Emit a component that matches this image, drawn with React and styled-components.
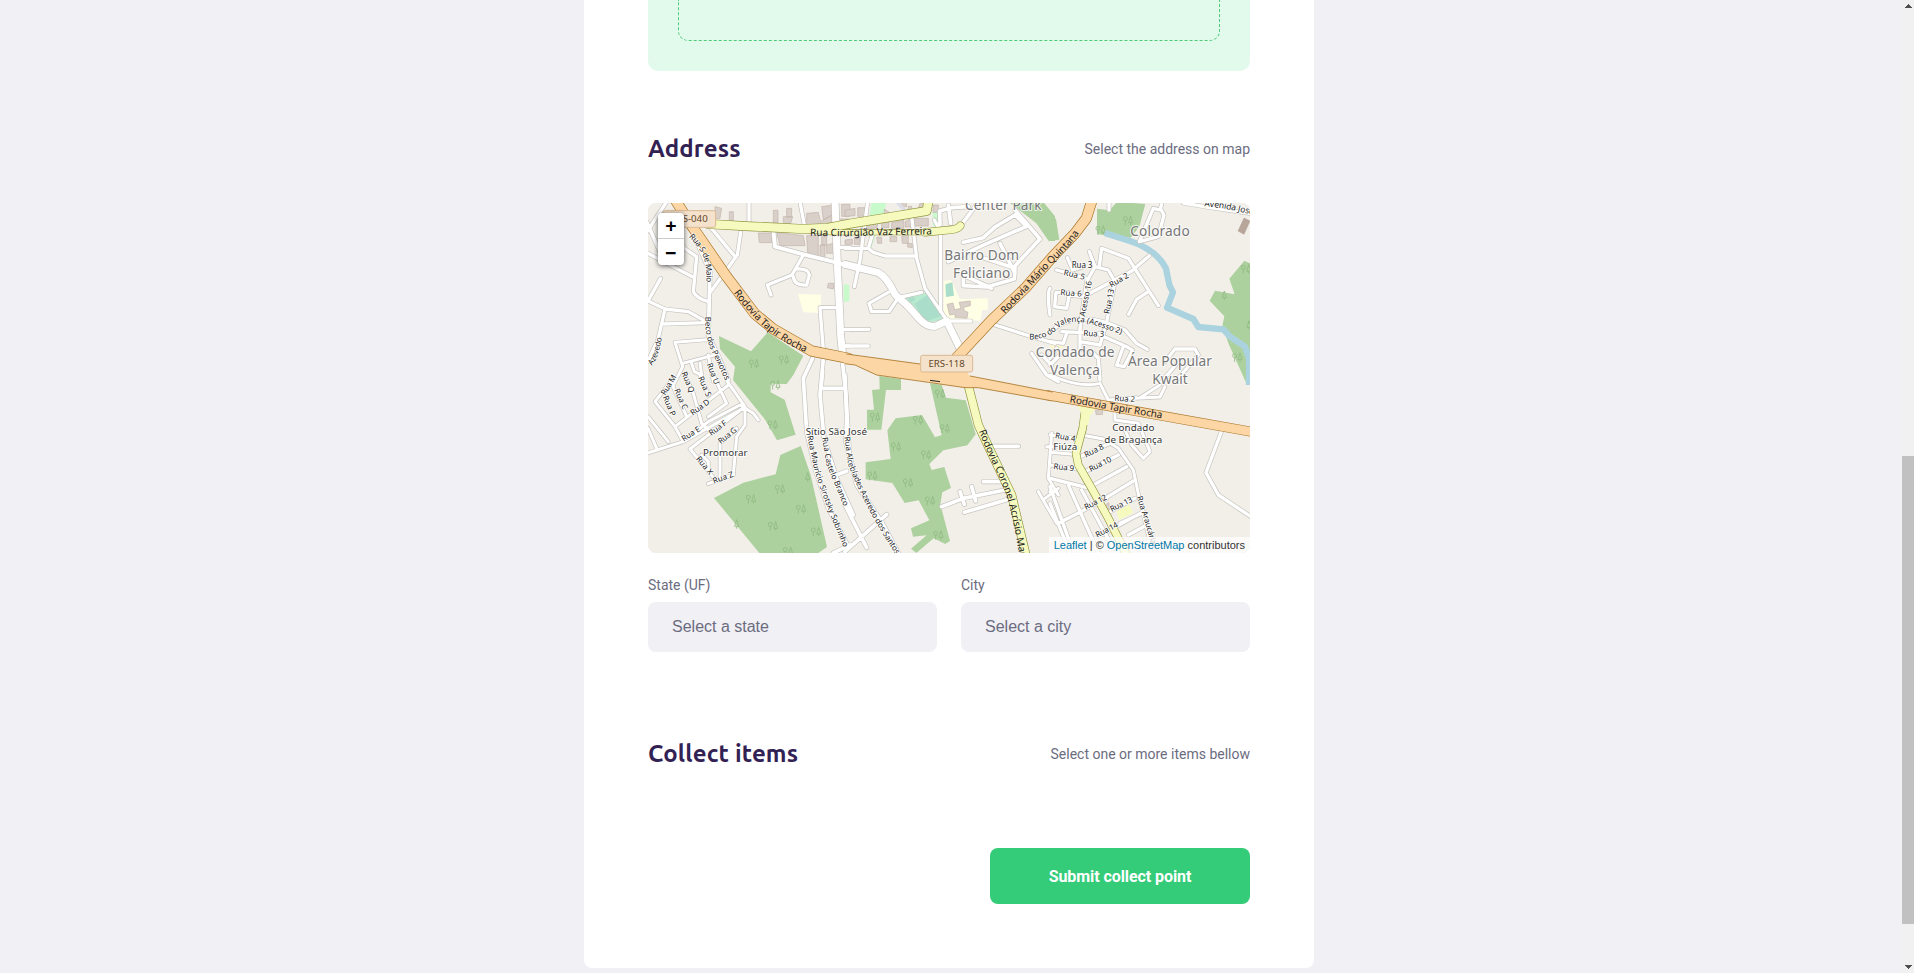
import React from 'react';
import styled, { createGlobalStyle } from 'styled-components';

const Global = createGlobalStyle`
  * { box-sizing: border-box; margin: 0; padding: 0; }
  body { background: #f0f0f5; font-family: Roboto, "Liberation Sans", sans-serif; overflow: hidden; }
`;

const Page = styled.div`
  display: flex;
  height: 973px;
  overflow: hidden;
`;
const Main = styled.main`
  flex: 1;
  display: flex;
  justify-content: center;
  align-items: flex-start;
  padding-right: 4px;
`;
const Card = styled.form`
  width: 730px;
  padding: 0 64px 64px;
  background: #fff;
  border-radius: 0 0 8px 8px;
`;
const Dropzone = styled.div`
  height: 71px;
  padding: 0 30px 30px;
  background: #e1faec;
  border-radius: 0 0 10px 10px;
`;
const DropzoneInner = styled.div`
  height: 41px;
  border: 1px dashed #4ecb79;
  border-top: 0;
  border-radius: 0 0 10px 10px;
`;
const Section = styled.section`
  margin-top: ${(p) => p.$top}px;
`;
const Legend = styled.header`
  display: flex;
  justify-content: space-between;
  align-items: center;
  height: 28px;
`;
const Title = styled.h2`
  font: 700 24px/28px Ubuntu, "Noto Sans", sans-serif;
  letter-spacing: 0.15px;
  color: #322153;
`;
const Hint = styled.span`
  font-size: 14px;
  line-height: 16px;
  color: #6c6c80;
`;
const MapFrame = styled.div`
  position: relative;
  height: 350px;
  margin: 40px 0 24px;
  border-radius: 8px;
  overflow: hidden;
  background: #f2efe9;
`;
const MapDrawing = styled.svg`
  display: block;
  width: 602px;
  height: 350px;
  font-family: "Noto Sans", sans-serif;
`;
const ZoomControl = styled.div`
  position: absolute;
  top: 10px;
  left: 10px;
  width: 26px;
  border-radius: 4px;
  background: #fff;
  box-shadow: 0 1px 5px rgba(0, 0, 0, 0.65);
`;
const ZoomButton = styled.button`
  display: flex;
  align-items: center;
  justify-content: center;
  width: 26px;
  height: 26px;
  border: 0;
  border-bottom: ${(p) => (p.$first ? '1px solid #ccc' : '0')};
  background: transparent;
  color: #000;
  font: bold 18px/25px "DejaVu Sans Mono", monospace;
`;
const Attribution = styled.div`
  position: absolute;
  right: 0;
  bottom: 0;
  padding: 0 5px;
  background: rgba(255, 255, 255, 0.7);
  color: #333;
  font: 11px/16px "Liberation Sans", sans-serif;
`;
const MapLink = styled.a`
  color: #0078a8;
`;
const Fields = styled.div`
  display: grid;
  grid-template-columns: 1fr 1fr;
  gap: 24px;
`;
const Field = styled.div`
  display: flex;
  flex-direction: column;
`;
const Label = styled.label`
  height: 17px;
  margin-bottom: 8px;
  font-size: 14px;
  line-height: 17px;
  color: #6c6c80;
`;
const SelectBox = styled.div`
  height: 50px;
  padding: 0 24px;
  border-radius: 8px;
  background: #f0f0f5;
  color: #6c6c80;
  font: 16px/50px "Liberation Sans", sans-serif;
`;
const Submit = styled.button`
  display: block;
  width: 260px;
  height: 56px;
  margin: 80px 0 0 auto;
  border: 0;
  border-radius: 8px;
  background: #34cb79;
  color: #fff;
  font: bold 16px Roboto, sans-serif;
  letter-spacing: -0.08px;
`;
const ScrollTrack = styled.aside`
  display: flex;
  flex-direction: column;
  width: 12px;
  background: #f1f1f1;
`;
const ScrollThumb = styled.div`
  height: 468px;
  margin: 439px 0 auto;
  background: #c1c1c1;
`;
const ScrollArrow = styled.svg`
  display: block;
  width: 12px;
  height: 17px;
  fill: #505050;
`;

/* The map is drawn at three units per pixel, split into six sectors. */
const SECTORS = {
  g: '0 0', a: '-24 -24', b: '591 -24', c: '1206 -24', d: '-24 516', e: '591 516', f: '1206 516',
};
const at = (s) => `translate(${SECTORS[s]})`;

const AREAS = [
  ['a', '#add19e', 'M237 423L333 469L383 412L490 482L460 540L440 567L392 566L392 592L434 614L467 719L411 736L374 672L279 555L285 515L240 462Z'],
  ['d', '#add19e', 'M222 369L310 323L407 298L421 240L482 213L512 300L561 516L535 534H358Z'],
  ['e', '#add19e', 'M103 3L168 12V45H123L109 164H66V104H87L81 45L104 43Z'],
  ['e', '#add19e', 'M255 25L290 29L303 68L362 76L392 178L367 211L295 226L253 267L260 285L298 276L318 339L292 352L286 388L315 498L301 507L266 490L214 534L198 521L245 481L204 485L198 460L253 436L221 376L179 384L142 324L62 313V262L137 252L127 166L152 130L231 120L270 187L290 180Z'],
  ['b', '#add19e', 'M490 20H594L630 64V138H611L574 85Z'],
  ['c', '#add19e', 'M0 60L18 72L28 134L0 138ZM141 41L178 46L202 20L286 27L268 95L242 128L141 118Z'],
  ['c', '#add19e', 'M600 205L583 197L538 251L554 298L495 287L479 317L523 364L517 394L536 447L590 567H606Z'],
  ['b', '#c8facc', 'M80 20H125L110 78L72 70ZM262 50H280V95H265ZM0 268H8V318H0Z'],
  ['b', '#c8facc', 'M75 120H92L78 162Z'],
  ['a', '#c8facc', 'M611 269H628V318L611 322Z'],
  ['a', '#ffffe5', 'M474 297L543 299V354L490 352Z'],
  ['b', '#ffffe5', 'M296 258L318 254L345 313L428 310V345H412L407 377L302 373L296 345Z'],
  ['f', '#f7fabf', 'M200 409L238 388L249 413L207 435Z'],
  ['c', '#fbf8d0', 'M0 440L45 455L20 465L0 460Z'],
  ['b', '#b8ead0', 'M180 306L246 291L297 376L252 382L208 347Z'],
  ['b', '#aadecb', 'M208 326L247 301L291 362L240 380ZM301 268L322 262L327 302L303 306ZM187 309L205 303L211 316L198 322Z'],
];
const BUILDINGS = [
  ['a', 'M355 114H395V143H358ZM400 46H414V84H400ZM430 65H458L452 86H430ZM440 40H455V66H440ZM268 50H280V76H268ZM225 35L245 40L240 70H225ZM500 55L535 52L542 80L575 60V92L500 98ZM410 112L490 122L495 152H420ZM500 122H535V184L503 173ZM545 118H560V150H545ZM560 150L580 145V175H560ZM565 265H582L580 282L562 278ZM598 72H630V110H600ZM545 35L580 30V58L550 75ZM605 28H630V64H605ZM540 150H555V190H540Z'],
  ['b', 'M38 38H60V64H38ZM118 42L132 52V78H118ZM170 22H185V35H170ZM190 34H200V55H190ZM0 46L30 40V62L0 64ZM204 70H250V93H210ZM60 80L100 76L96 98L60 104ZM110 82L132 78V98H110ZM140 83L176 76V100H140ZM95 127L110 127V145H98ZM170 125L190 120V145H172ZM135 125H155V140H135ZM188 145L202 146V158L188 156ZM180 80L200 70V96H180ZM225 25H235V40H220ZM0 135L22 132V148H0ZM28 128L45 125V148H28ZM264 30H280V52H264Z'],
  ['b', 'M306 328L324 324L329 344L348 340L342 322L376 318V332L356 337L358 347L369 352L366 370L330 367V357L314 360Z'],
  ['f', 'M136 105L157 103L158 118L139 119ZM166 390L176 383L180 400L170 404Z'],
];

/* sector, fill width, path */
const STREETS = [
  ['a', 10, 'M327 15V80M480 20L492 85M210 95L285 185M302 112L292 180L212 290M490 180L456 240L382 270L393 300M460 245Q462 272 500 270L508 240Q505 220 470 222'],
  ['a', 10, 'M585 338H540L552 492M630 158L600 157M80 20L20 112M24 175L160 247M62 250L24 318L75 342L145 350L202 382M70 387L200 383M75 342L55 430L24 500M130 158L170 185L160 290Q170 310 205 320'],
  ['a', 11, 'M135 60L210 230L208 310L205 420L238 490L265 555M20 80L60 170L130 155'],
  ['a', 9, 'M105 442L200 434M105 442L128 515L100 570M128 505L230 478M205 480L220 560M155 505L163 530L185 540L180 505M612 404H630M615 453H630'],
  ['a', 12, 'M401 115L405 155L490 178L600 205L640 215'],
  ['a', 21, 'M585 15L592 205L602 420L608 482'],
  ['b', 21, 'M0 208L100 233Q125 245 150 298L190 334L225 374Q246 396 270 394L305 378L352 475'],
  ['b', 10, 'M68 20L45 195L28 275M0 160H70L85 172L120 183H210M70 160L82 120M200 65L215 190L240 280L303 372M268 75L287 110V350M130 292L72 325L80 350H132L160 308L230 292M305 378H378M0 403H72M0 453H70'],
  ['b', 11, 'M285 48L320 38L370 35M310 30L317 85M350 88L400 22M284 48L285 90M355 142L415 128L450 96L510 60L545 94L420 148L310 200M510 45L585 132L505 218L420 190M510 218L508 252L425 276L355 272V240M465 145L510 235M355 240L440 280'],
  ['b', 10, 'M450 390L560 425L630 445'],
  ['b', 11, 'M360 530L365 560'],
  ['b', 10, 'M560 475L605 540L640 560M590 480L620 510'],
  ['c', 10, 'M177 20V45M335 28L330 45L310 40L268 140L325 125L342 60L332 42M400 24L470 36L600 55M20 225L110 250M52 188L68 225L100 215M118 170L135 215L110 260L90 400M135 215L175 225L195 260L170 380L150 450M148 212L155 160L235 190L325 332M298 182L245 228L110 300M295 290L260 313L236 358M55 292H18L14 335L50 340L58 300L100 305'],
  ['c', 10, 'M0 410Q70 350 175 385L225 405L260 445L292 463M35 410L150 415M90 400V465L70 475M0 440L40 445L50 415M150 420L230 455L248 466L222 515L200 510L220 455M125 470L145 490L150 555M20 460L0 490M375 462H435L445 480L380 555M375 462L345 500M0 360Q-10 290 0 280M335 560L385 500M90 440L150 450M0 510L30 480'],
  ['d', 9, 'M100 10L45 80L105 155L130 200L205 140L300 90L340 115L355 135M135 0L160 55L185 145L210 170M95 25L140 125M180 0L205 60M220 0L260 85L205 125M262 20L315 95V150L290 185L280 300L205 326M105 155L265 30M315 95L150 222L222 310M24 125L85 200M24 160L50 220M20 235L130 200L310 100M290 160L240 205L240 310M185 240L205 260V290'],
  ['d', 11, 'M518 -50L490 10L500 170L528 290L565 400L625 515M550 -50L540 60L552 190L590 310L640 420M548 -10L543 40H615M605 -60L618 60L628 240L650 320M590 300L620 288M580 534L630 510'],
  ['e', 11, 'M0 0L5 130L2 200L35 330L110 440L160 534M0 390L65 518M0 530L125 418M445 214H520M415 320H465M290 395L355 370L480 345M345 350L358 388M380 335L392 378M358 412L500 370'],
  ['e', 9, 'M620 175L610 310L640 360M605 215H630M580 350L635 445M600 370L640 340'],
  ['f', 9, 'M0 0Q90 40 150 25L175 75L260 68M270 68L330 30M258 70L330 66L345 35M195 75L195 135L265 145L300 230L280 250L245 210L225 165M0 180L75 190M0 232L70 238M0 270L80 282M95 180L160 192L205 220L250 285L270 380L300 500'],
  ['f', 10, 'M90 245L180 205M105 290L205 240M130 330L230 275M165 370L250 318M25 445L170 370M180 410L255 370M145 485L280 410M210 445L275 415M235 480L290 450M0 310L120 340M0 350L20 350M0 335L55 490M55 330L145 534M0 385L60 534M95 345L190 520M250 510L310 495M516 165L468 293L505 360L610 430'],
];
const YELLOW = [
  ['b', 14, 'M-110 106L-40 112L240 112'],
  ['b', 21, 'M240 112L320 104Q340 102 346 92'],
  ['a', 25, 'M205 87L330 94L490 102L560 99L630 86L740 68L860 48L865 20L866 10'],
  ['e', 23, 'M370 32L400 150L440 235L500 360L545 550'],
  ['f', 21, 'M108 90L98 160L78 235L85 270L125 340L175 430L235 550'],
];
const ORANGE = [
  ['a', 29, 'M103 10L150 85L260 245L345 357L400 402L515 468L625 490'],
  ['g', 29, 'M1332 -8L1315 46L1281 91L1215 160L1131 256L1031 351L920 470'],
  ['f', 26, 'M-5 61L300 116L620 173'],
];

const TREES = [
  ['a', 342, 506], ['a', 432, 494], ['a', 406, 570], ['d', 398, 149], ['d', 420, 342], ['d', 333, 372], ['d', 483, 402], ['d', 399, 453], ['d', 528, 470], ['d', 444, 529],
  ['e', 90, 126], ['e', 285, 56], ['e', 219, 135], ['e', 153, 215], ['e', 243, 239], ['e', 189, 323], ['e', 255, 377], ['e', 280, 480], ['e', 82, 302], ['e', 299, 160],
  ['c', 234, 76], ['c', 152, 105], ['c', 588, 222], ['c', 562, 487],
];
const LONE_TREES = [['d', 503, 306], ['d', 290, 447], ['c', 523, 301], ['c', 597, 390]];

/* sector, text, centre x, baseline, size, width, colour */
const PLACES = [
  ['b', 'Center Park', 475, 45, 41, 230, '#777'],
  ['b', 'Bairro Dom', 410, 195, 41, 224, '#777'],
  ['b', 'Feliciano', 410, 249, 41, 172, '#777'],
  ['c', 'Colorado', 330, 123, 41, 178, '#777'],
  ['c', 'Condado de', 75, 487, 41, 236, '#777'],
  ['c', 'Valença', 75, 541, 41, 150, '#777'],
  ['c', 'Área Popular', 360, 512, 41, 252, '#777'],
  ['c', 'Kwait', 360, 566, 41, 106, '#777'],
  ['g', 'Sítio São José', 565, 697, 29.5, 184, '#333'],
  ['d', 'Promorar', 256, 242, 29.5, 134, '#333'],
  ['f', 'Condado', 250, 167, 29.5, 126, '#333'],
  ['f', 'de Bragança', 250, 205, 29.5, 174, '#333'],
  ['f', 'Fiúza', 46, 225, 29.5, 72, '#333'],
];

/* sector, text, size, length, baseline path */
const ROAD_NAMES = [
  ['a', 'Rua Cirurgião Vaz Ferreira', 30, 366, 'M510 122L620 124L700 121L890 118'],
  ['a', 'Rodovia Tapir Rocha', 30, 284, 'M281 293Q338 372 398 416T520 480'],
  ['g', 'Rodovia Mário Quintana', 30, 330, 'M1071 334L1221 172Q1278 120 1306 70'],
  ['f', 'Rodovia Tapir Rocha', 30, 282, 'M58 82L200 108L350 133'],
  ['e', 'Rodovia Coronel Acrísio Martins', 30, 450, 'M402 168Q420 220 450 280T495 400T526 560'],
  ['a', 'Rua S de Maio', 24, 152, 'M146 126Q178 155 190 185T199 275'],
  ['a', 'Beco dos Peixotos', 24, 204, 'M196 365Q195 430 215 470T262 570'],
  ['a', 'Azevedo', 24, 90, 'M36 512Q58 485 66 420'],
  ['a', 'Rua U', 24, 66, 'M200 508L226 575'],
  ['d', 'Rua M', 24, 66, 'M76 62L112 2'],
  ['d', 'Rua Q', 24, 66, 'M124 -6L152 62'],
  ['d', 'Rua S', 24, 64, 'M174 8L202 72'],
  ['d', 'Rua C', 24, 66, 'M102 45L130 108'],
  ['d', 'Rua P', 24, 64, 'M68 66L96 132'],
  ['d', 'Rua D', 24, 65, 'M158 122L215 82'],
  ['d', 'Rua E', 24, 62, 'M131 200L190 162'],
  ['d', 'Rua F', 24, 60, 'M214 183L270 142'],
  ['d', 'Rua G', 24, 64, 'M242 208L300 162'],
  ['d', 'Rua X', 24, 64, 'M167 252L215 310'],
  ['d', 'Rua Z', 24, 64, 'M222 326L290 301'],
  ['d', 'Rua Maurício Sirotsky Sobrinho', 24, 352, 'M502 184L524 290Q560 400 616 528'],
  ['d', 'Rua Castelo Branco', 24, 218, 'M546 188L560 270L618 410'],
  ['e', 'Rua Alcebíades Azeredo dos Santos', 24, 390, 'M-2 186L10 270Q60 400 160 550'],
  ['c', 'Rua 3', 24, 62, 'M65 220H135'],
  ['c', 'Rua 5', 24, 64, 'M40 240L110 256'],
  ['c', 'Rua 6', 24, 64, 'M31 300L105 306'],
  ['c', 'Rua 2', 24, 62, 'M184 278L240 245'],
  ['c', 'Acesso 16', 24, 108, 'M104 365L128 250'],
  ['c', 'Rua 13', 24, 76, 'M178 358L194 275'],
  ['c', 'Rua 3', 24, 62, 'M100 422L170 426'],
  ['g', 'Beco do Valença (Acesso 2)', 24, 296, 'M1144 409Q1195 412 1230 376T1350 370L1430 397'],
  ['c', 'Avenida José', 26, 150, 'M463 34Q530 38 625 64'],
  ['f', 'Rua 2', 24, 62, 'M193 77L260 82'],
  ['f', 'Rua 4', 24, 62, 'M14 189L80 201'],
  ['f', 'Rua 9', 24, 62, 'M10 282L78 289'],
  ['f', 'Rua 8', 24, 62, 'M108 248L168 218'],
  ['f', 'Rua 10', 24, 72, 'M122 291L193 255'],
  ['f', 'Rua 12', 24, 72, 'M108 405L178 370'],
  ['f', 'Rua 13', 24, 72, 'M185 411L256 376'],
  ['f', 'Rua 14', 24, 72, 'M142 488L212 452'],
  ['f', 'Rua Araucária', 24, 150, 'M260 366L284 440L310 530'],
];

function RoadLayer({ roads, casing, fill, edge }) {
  return [true, false].map((outer) => (
    <g key={outer} fill="none" strokeLinecap="round" strokeLinejoin="round" stroke={outer ? casing : fill}>
      {roads.map(([s, w, d], i) => (
        <path key={i} transform={at(s)} d={d} strokeWidth={outer ? w + edge : w} />
      ))}
    </g>
  ));
}

function Shield({ x, y, width, children }) {
  return (
    <g>
      <rect x={x} y={y} width={width} height="50" rx="6" fill="#f4e2cd" stroke="#dbb892" strokeWidth="3" />
      <text x={x + width / 2} y={y + 35} textAnchor="middle" fontSize="29" fill="#64472a">{children}</text>
    </g>
  );
}

function StreetMap() {
  return (
    <MapDrawing viewBox="0 0 1806 1050">
      <rect width="1806" height="1050" fill="#f2efe9" />
      {AREAS.map(([s, color, d], i) => <path key={i} transform={at(s)} d={d} fill={color} />)}
      <g fill="none" stroke="#8fb982" strokeWidth="2.5">
        {TREES.map(([s, x, y], i) => (
          <g key={i} transform={at(s)}>
            <circle cx={x - 8} cy={y - 5} r="6" />
            <path d={`M${x - 8} ${y + 14}V${y + 1}M${x + 8} ${y + 14}V${y + 7}M${x + 8} ${y - 13}L${x + 14} ${y + 7}H${x + 2}Z`} />
          </g>
        ))}
        {LONE_TREES.map(([s, x, y], i) => (
          <path key={i} transform={at(s)} d={`M${x} ${y + 14}V${y + 7}M${x} ${y - 13}L${x + 6} ${y + 7}H${x - 6}Z`} />
        ))}
      </g>
      {BUILDINGS.map(([s, d], i) => (
        <path key={i} transform={at(s)} d={d} fill="#d9d0c9" stroke="#c3b4aa" strokeWidth="2" />
      ))}
      <path transform={at('b')} d="M155 20L185 52" stroke="#dddde8" strokeWidth="10" />
      <path transform={at('c')} d="M582 69L600 78L582 118L564 108Z" fill="#b8a69b" stroke="#a08d81" />
      <path
        transform={at('c')}
        d="M164 114L240 138Q320 165 348 220L358 270L369 292L351 338L430 372L445 396L520 403L540 425L585 455L597 490V570"
        fill="none" stroke="#aad3df" strokeWidth="19" strokeLinejoin="round"
      />
      <RoadLayer roads={STREETS} casing="#c6c3bf" fill="#fff" edge={4} />
      <RoadLayer roads={YELLOW} casing="#91963f" fill="#f7fabf" edge={4} />
      <path transform={at('f')} d="M82 90L95 116L93 150H115L120 122L138 100Z" fill="#f7fabf" />
      <RoadLayer roads={ORANGE} casing="#a87528" fill="#fcd6a4" edge={4} />
      <path
        d="M588 453L691 466L816 482L925 467L966 519L1214 567V594L991 554H951L841 538L686 516L621 486L588 482Z"
        fill="#fcd6a4"
      />
      <path
        d="M595 453L691 466L816 483M966 519L1214 567M1214 594L991 554H951L841 538L686 516L621 486L590 482"
        fill="none" stroke="#a87528" strokeWidth="2.5"
      />
      <path d="M846 532L876 536" stroke="#222" strokeWidth="3" />
      <Shield x={46} y={23} width={157}>ERS-040</Shield>
      <Shield x={818} y={457} width={156}>ERS-118</Shield>
      <g stroke="#fff" strokeOpacity="0.75" strokeWidth="6" strokeLinejoin="round" paintOrder="stroke">
        {PLACES.map(([s, text, x, y, size, length, color], i) => (
          <text key={i} transform={at(s)} x={x} y={y} fontSize={size} textLength={length} textAnchor="middle" fill={color}>{text}</text>
        ))}
      </g>
      <g fill="#1c1c1c">
        {ROAD_NAMES.map(([s, text, size, length, d], i) => (
          <g key={i} transform={at(s)}>
            <path id={`road-name-${i}`} d={d} fill="none" />
            <text
              fontSize={size} paintOrder="stroke" strokeLinejoin="round"
              stroke={size > 26 ? 'none' : '#fff'} strokeOpacity="0.85" strokeWidth="5"
            >
              <textPath href={`#road-name-${i}`} textLength={length}>{text}</textPath>
            </text>
          </g>
        ))}
      </g>
    </MapDrawing>
  );
}

export default function App() {
  return (
    <>
      <Global />
      <Page>
        <Main>
          <Card>
            <Dropzone><DropzoneInner /></Dropzone>
            <Section $top={64}>
              <Legend>
                <Title>Address</Title>
                <Hint>Select the address on map</Hint>
              </Legend>
              <MapFrame>
                <StreetMap />
                <ZoomControl>
                  <ZoomButton type="button" $first>+</ZoomButton>
                  <ZoomButton type="button">−</ZoomButton>
                </ZoomControl>
                <Attribution>
                  <MapLink>Leaflet</MapLink> | © <MapLink>OpenStreetMap</MapLink> contributors
                </Attribution>
              </MapFrame>
              <Fields>
                <Field>
                  <Label>State (UF)</Label>
                  <SelectBox>Select a state</SelectBox>
                </Field>
                <Field>
                  <Label>City</Label>
                  <SelectBox>Select a city</SelectBox>
                </Field>
              </Fields>
            </Section>
            <Section $top={88}>
              <Legend>
                <Title>Collect items</Title>
                <Hint>Select one or more items bellow</Hint>
              </Legend>
            </Section>
            <Submit type="button">Submit collect point</Submit>
          </Card>
        </Main>
        <ScrollTrack>
          <ScrollArrow viewBox="0 0 12 17" shapeRendering="crispEdges"><path d="M6 4h1v1h1v1h1v1h1v1H3V7h1V6h1V5h1z" /></ScrollArrow>
          <ScrollThumb />
          <ScrollArrow viewBox="0 0 12 17" shapeRendering="crispEdges"><path d="M3 9h7v1H9v1H8v1H7v1H6v-1H5v-1H4v-1H3z" /></ScrollArrow>
        </ScrollTrack>
      </Page>
    </>
  );
}
